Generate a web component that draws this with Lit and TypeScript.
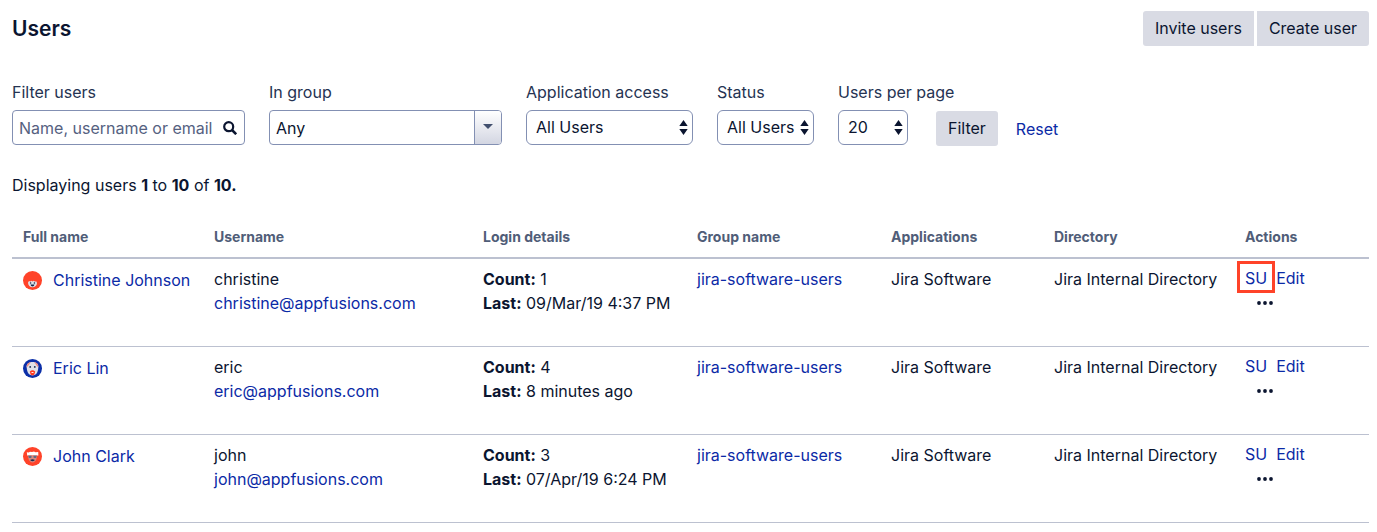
import { LitElement, html, css, svg } from "lit";
import { customElement, property } from "lit/decorators.js";
import { classMap } from "lit/directives/class-map.js";

interface User {
  name: string;
  username: string;
  email: string;
  count: number;
  last: string;
  avatar: string;
  marked?: boolean;
}

const USERS: User[] = [
  { name: "Christine Johnson", username: "christine", email: "christine@appfusions.com", count: 1, last: "09/Mar/19 4:37 PM", avatar: "curly", marked: true },
  { name: "Eric Lin", username: "eric", email: "eric@appfusions.com", count: 4, last: "8 minutes ago", avatar: "goatee" },
  { name: "John Clark", username: "john", email: "john@appfusions.com", count: 3, last: "07/Apr/19 6:24 PM", avatar: "visor" },
];

const AVATARS: Record<string, unknown> = {
  curly: svg`
    <circle cx="9.5" cy="9.5" r="9.5" fill="#ff4329"/>
    <path d="M5 11.5 6 10l1.500.6L8.500 9.800l1 .7 1.200-.8 1 .9L13.500 10.500l.5 1.500c0 2.600-2 4.300-4.500 4.300S5 14.500 5 11.500z" fill="#dfe1e8"/>
    <circle cx="7.600" cy="12" r=".8" fill="#172b4d"/>
    <circle cx="11.400" cy="12" r=".8" fill="#172b4d"/>
    <path d="M7.500 13.400h4q-.4 2-2 2t-2-2z" fill="#172b4d"/>`,
  goatee: svg`
    <circle cx="9.500" cy="9.500" r="9.500" fill="#0b2fa8"/>
    <path d="M3.600 7.500C3.600 4.600 6.200 3 9.500 3s5.900 1.600 5.900 4.500L15 11c-.6 3.200-2.400 5.400-5.500 5.400S4.600 14.200 4 11z" fill="#dfe1e8"/>
    <path d="M3.600 8.500C3.600 5 5.600 3.200 7.800 3.100L5.600 6.200zM15.400 8.500c0-3.500-2-5.300-4.200-5.400l2.200 3.100z" fill="#f08a80"/>
    <circle cx="7.200" cy="7.900" r=".9" fill="#172b4d"/>
    <circle cx="11.800" cy="7.900" r=".9" fill="#172b4d"/>
    <path d="M6.800 12.600q2.700-2.600 5.400 0l-.8 2.800q-1.900 1.800-3.800 0z" fill="#ff3a22"/>
    <path d="M8.500 13h2v.9h-2z" fill="#fff"/>`,
  visor: svg`
    <circle cx="9.500" cy="9.500" r="9.500" fill="#ff4329"/>
    <path d="M3.800 5.200l2 .3 1.200-.8 2 .4 2-.5 1.500.6 2.700-.2.200 3.500H4.200z" fill="#fff"/>
    <path d="M5 8.500h9l-.5 3.500c-.8 2.300-2.300 3.500-4 3.500S6.300 14.300 5.500 12z" fill="#d8877f"/>
    <path d="M5.200 8.700h3.500l-.5 2.200H6zM10.300 8.700h3.500L13 10.900h-2.200z" fill="#5e6c84"/>
    <path d="M7.500 12.700q2-1 4 0v.9q-2 1.200-4 0z" fill="#172b4d"/>`,
};

@customElement("user-avatar")
class UserAvatar extends LitElement {
  @property() kind = "curly";

  static styles = css`
    :host { display: block; width: 19px; height: 19px; flex: none; }
    .art { display: block; width: 100%; height: 100%; }
  `;

  render() {
    return html`<svg class="art" viewBox="0 0 19 19" aria-hidden="true">${AVATARS[this.kind]}</svg>`;
  }
}

@customElement("app-root")
class AppRoot extends LitElement {
  static styles = css`
    :host {
      display: block;
      padding: 11px 8px 8px 12px;
      background: #fff;
      color: #0b1530;
      font: 400 16px/24px Inter, "Liberation Sans", sans-serif;
    }
    *, *::before { box-sizing: border-box; }
    a { color: #0b2aa6; text-decoration: none; }
    a:hover { text-decoration: underline; }
    b { font-weight: 700; }
    button, input, select { font: inherit; color: inherit; margin: 0; }

    .header { display: flex; justify-content: space-between; align-items: center; }
    .title { margin: 0; font-size: 21px; line-height: 35px; font-weight: 600; }
    .group { display: flex; gap: 3px; }
    .button {
      height: 35px;
      padding: 0 12px 2px;
      border: 0;
      border-radius: 3px;
      background: #d9dbe4;
      white-space: nowrap;
    }
    .group .button:first-child { border-radius: 3px 0 0 3px; }
    .group .button:last-child { border-radius: 0 3px 3px 0; }

    .filters { display: flex; flex-wrap: wrap; align-items: flex-end; gap: 24px; margin-top: 34px; }
    .field { display: flex; flex-direction: column; gap: 6px; white-space: nowrap; }
    .field label { color: #253352; }
    .box {
      position: relative;
      display: flex;
      height: 35px;
      border: 1px solid #8390b3;
      border-radius: 4px;
      background: #fff;
    }
    .wide { width: 233px; }
    .access { width: 167px; }
    .status { width: 97px; }
    .per-page { width: 70px; }
    .text { flex: 1; min-width: 0; padding: 0 6px; border: 0; background: none; outline: none; }
    .text::placeholder { color: #55617f; opacity: 1; }
    .search { flex: none; align-self: center; width: 14px; height: 14px; margin-right: 7px; }
    .drop {
      display: grid;
      place-items: center;
      width: 27px;
      padding: 0 0 2px;
      border: 0;
      border-left: 1px solid #8390b3;
      border-radius: 0 3px 3px 0;
      background: linear-gradient(#fff, #d3d6e2);
    }
    .caret { width: 10px; height: 5px; }
    .select { border-radius: 6px; }
    .select select {
      flex: 1;
      min-width: 0;
      padding: 0 0 1px 9px;
      border: 0;
      border-radius: 6px;
      background: none;
      appearance: none;
      outline: none;
    }
    .arrows { position: absolute; right: 4px; top: 9px; width: 9px; height: 15px; pointer-events: none; }
    .submit { display: flex; align-items: center; gap: 18px; margin: 0 0 -1px 4px; }

    .summary { margin: 28px 0 0; }

    .table { width: 100%; margin-top: 28px; border-collapse: separate; border-spacing: 0; table-layout: fixed; }
    .c-name { width: 191px; }
    .c-username { width: 269px; }
    .c-login { width: 214px; }
    .c-group { width: 194px; }
    .c-apps { width: 163px; }
    .c-dir { width: 191px; }
    th {
      padding: 0 0 8px 11px;
      border-bottom: 2px solid #bcc1d0;
      text-align: left;
      font-size: 14px;
      line-height: 24px;
      font-weight: 700;
      color: #505d78;
    }
    td { padding: 8px 0 29px 11px; border-bottom: 1px solid #bcc1d0; vertical-align: top; white-space: nowrap; }
    .person { display: flex; align-items: center; gap: 11px; padding-top: 1px; }
    .actions { display: flex; gap: 9px; line-height: 22px; }
    .su { position: relative; }
    .marked::before {
      content: "";
      position: absolute;
      inset: -6px -8px -4px;
      border: 3px solid #ff4329;
      pointer-events: none;
    }
    .more { display: flex; align-items: center; height: 28px; margin-left: 12px; padding: 0; border: 0; background: none; }
    .dots { width: 16px; height: 4px; }
    .line { display: block; }
  `;

  private select(id: string, label: string, size: string, options: string[]) {
    return html`
      <div class="field ${size}">
        <label for=${id}>${label}</label>
        <div class="box select">
          <select id=${id}>${options.map((o) => html`<option>${o}</option>`)}</select>
          <svg class="arrows" viewBox="0 0 9 15" aria-hidden="true">
            <path d="M4.500 0 8.700 6H.3zM4.500 15 .3 9h8.400z" fill="#0b1530"/>
          </svg>
        </div>
      </div>`;
  }

  private row(u: User) {
    return html`
      <tr>
        <td><div class="person"><user-avatar kind=${u.avatar}></user-avatar><a href="#${u.username}">${u.name}</a></div></td>
        <td><span class="line">${u.username}</span><a href="mailto:${u.email}">${u.email}</a></td>
        <td><span class="line"><b>Count:</b> ${u.count}</span><span class="line"><b>Last:</b> ${u.last}</span></td>
        <td><a href="#group">jira-software-users</a></td>
        <td>Jira Software</td>
        <td>Jira Internal Directory</td>
        <td>
          <div class="actions">
            <a class=${classMap({ su: true, marked: !!u.marked })} href="#su">SU</a>
            <a href="#edit">Edit</a>
          </div>
          <button class="more" type="button" aria-label="More actions">
            <svg class="dots" viewBox="0 0 16 4" aria-hidden="true" fill="#0b1530">
              <circle cx="2" cy="2" r="1.900"/><circle cx="8" cy="2" r="1.900"/><circle cx="14" cy="2" r="1.900"/>
            </svg>
          </button>
        </td>
      </tr>`;
  }

  render() {
    return html`
      <header class="header">
        <h1 class="title">Users</h1>
        <div class="group">
          <button class="button" type="button">Invite users</button>
          <button class="button" type="button">Create user</button>
        </div>
      </header>

      <form class="filters" @submit=${(e: Event) => e.preventDefault()}>
        <div class="field wide">
          <label for="filter">Filter users</label>
          <div class="box">
            <input class="text" id="filter" type="text" placeholder="Name, username or email" />
            <svg class="search" viewBox="0 0 14 14" fill="none" stroke="#0b1530" stroke-width="2.200" aria-hidden="true">
              <circle cx="5.700" cy="5.700" r="4.500"/>
              <path d="M9 9l4.200 4.200" stroke-width="2.600"/>
            </svg>
          </div>
        </div>
        <div class="field wide">
          <label for="group">In group</label>
          <div class="box">
            <input class="text" id="group" type="text" .value=${"Any"} />
            <button class="drop" type="button" aria-label="Show groups">
              <svg class="caret" viewBox="0 0 10 5" aria-hidden="true"><path d="M0 0h10L5 5z" fill="#42506e"/></svg>
            </button>
          </div>
        </div>
        ${this.select("access", "Application access", "access", ["All Users"])}
        ${this.select("status", "Status", "status", ["All Users"])}
        ${this.select("per-page", "Users per page", "per-page", ["20", "50", "100"])}
        <div class="submit">
          <button class="button" type="submit">Filter</button>
          <a href="#reset">Reset</a>
        </div>
      </form>

      <p class="summary">Displaying users <b>1</b> to <b>10</b> of <b>10.</b></p>

      <table class="table">
        <colgroup>
          <col class="c-name" /><col class="c-username" /><col class="c-login" /><col class="c-group" />
          <col class="c-apps" /><col class="c-dir" /><col />
        </colgroup>
        <thead>
          <tr>
            <th>Full name</th><th>Username</th><th>Login details</th><th>Group name</th>
            <th>Applications</th><th>Directory</th><th>Actions</th>
          </tr>
        </thead>
        <tbody>${USERS.map((u) => this.row(u))}</tbody>
      </table>`;
  }
}
